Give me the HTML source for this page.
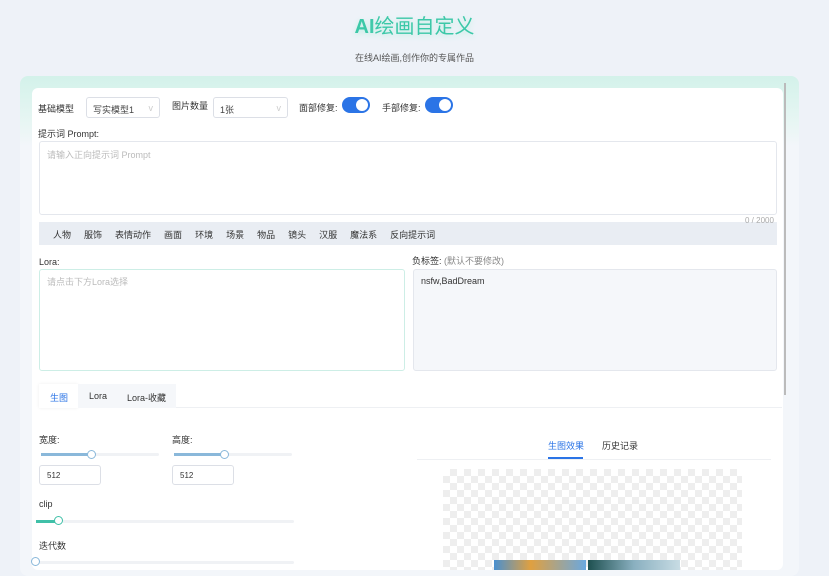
<!DOCTYPE html>
<html><head><meta charset="utf-8"><style>
*{margin:0;padding:0;box-sizing:border-box}
body{width:829px;height:570px;overflow:hidden;background:#eef2f8;font-family:"Liberation Sans","Noto Sans CJK SC",sans-serif;font-size:9px;color:#333;position:relative}
.a{position:absolute;white-space:nowrap}
.title{left:0;width:829px;top:10px;text-align:center;font-size:20px;font-weight:bold;color:#3cc8a8;text-shadow:0 2px 6px #bfeee2}
.sub{left:0;width:829px;top:51px;text-align:center;font-size:9px;color:#555}
.card{left:20px;top:76px;width:779px;height:500px;border-radius:8px;background:linear-gradient(#d3f2ea 0,#e9f6f4 50px,#f3f6fa 70px)}
.panel{left:32px;top:88px;width:751px;height:482px;background:#fff;border-radius:6px}
.sel{height:21px;border:1px solid #dcdfe6;border-radius:3px;background:#fff;padding:5px 6px;color:#444}
.tog{width:28px;height:16px;border-radius:8px;background:#2b74e6}
.tog:after{content:"";position:absolute;right:2px;top:2px;width:12px;height:12px;border-radius:50%;background:#fff}
.ta{border:1px solid #e4e7ed;border-radius:3px;background:#fff}
.ph{color:#bbb}
.tags span{margin-right:13px}
.inp{width:62px;height:20px;border:1px solid #dcdfe6;border-radius:3px;padding:5px 7px;font-size:8px}
.track{height:3px;background:#f0f2f5;border-radius:2px}
.knob{width:9px;height:9px;border-radius:50%;border:1.5px solid #8ab8da;background:#fff}
</style></head><body>
<div class="a title">AI<span style="font-weight:normal">绘画自定义</span></div>
<div class="a sub">在线AI绘画,创作你的专属作品</div>
<div class="a card"></div>
<div class="a panel"></div>
<div class="a" style="left:784px;top:83px;width:2px;height:312px;background:#bbb"></div>

<div class="a" style="left:38px;top:102px">基础模型</div>
<div class="a sel" style="left:86px;top:97px;width:74px">写实模型1 <span style="color:#ccc;float:right">v</span></div>
<div class="a" style="left:172px;top:99px">图片数量</div>
<div class="a sel" style="left:213px;top:97px;width:75px">1张 <span style="color:#ccc;float:right">v</span></div>
<div class="a" style="left:299px;top:101px">面部修复:</div>
<div class="a tog" style="left:342px;top:97px"></div>
<div class="a" style="left:382px;top:101px">手部修复:</div>
<div class="a tog" style="left:425px;top:97px"></div>

<div class="a" style="left:38px;top:127px">提示词 Prompt:</div>
<div class="a ta" style="left:39px;top:141px;width:738px;height:74px;padding:6px 7px"><span class="ph">请输入正向提示词 Prompt</span></div>
<div class="a tags" style="left:39px;top:222px;width:738px;height:23px;background:#e9edf3;padding:6px 14px">
<span>人物</span><span>服饰</span><span>表情动作</span><span>画面</span><span>环境</span><span>场景</span><span>物品</span><span>镜头</span><span>汉服</span><span>魔法系</span><span>反向提示词</span></div>
<div class="a" style="left:745px;top:216px;color:#aaa;font-size:8px">0 / 2000</div>

<div class="a" style="left:39px;top:257px">Lora:</div>
<div class="a ta" style="left:39px;top:269px;width:366px;height:102px;border-color:#cdeee6;padding:5px 7px"><span class="ph">请点击下方Lora选择</span></div>
<div class="a" style="left:412px;top:254px">负标签: <span style="color:#888">(默认不要修改)</span></div>
<div class="a ta" style="left:413px;top:269px;width:364px;height:102px;background:#f5f7fa;padding:6px 7px">nsfw,BadDream</div>

<div class="a" style="left:39px;top:384px;width:743px;height:24px;border-bottom:1px solid #eef0f3"></div>
<div class="a" style="left:39px;top:384px;width:39px;height:24px;background:#fff;color:#2b74e6;padding:7px 11px;box-shadow:0 0 3px #eee">生图</div>
<div class="a" style="left:78px;top:384px;width:38px;height:24px;background:#f5f7fa;padding:7px 11px">Lora</div>
<div class="a" style="left:116px;top:384px;width:60px;height:24px;background:#f5f7fa;padding:7px 11px">Lora-收藏</div>

<div class="a" style="left:39px;top:433px">宽度:</div>
<div class="a track" style="left:41px;top:453px;width:118px"></div>
<div class="a" style="left:41px;top:453px;width:51px;height:3px;background:#8ab8da"></div>
<div class="a knob" style="left:87px;top:450px"></div>
<div class="a inp" style="left:39px;top:465px">512</div>
<div class="a" style="left:172px;top:433px">高度:</div>
<div class="a track" style="left:174px;top:453px;width:118px"></div>
<div class="a" style="left:174px;top:453px;width:51px;height:3px;background:#8ab8da"></div>
<div class="a knob" style="left:220px;top:450px"></div>
<div class="a inp" style="left:172px;top:465px">512</div>
<div class="a" style="left:39px;top:499px">clip</div>
<div class="a track" style="left:36px;top:520px;width:258px"></div>
<div class="a" style="left:36px;top:520px;width:23px;height:3px;background:#40c0a8"></div>
<div class="a knob" style="left:54px;top:516px;border-color:#40c0a8"></div>
<div class="a" style="left:39px;top:539px">迭代数</div>
<div class="a track" style="left:36px;top:561px;width:258px"></div>
<div class="a knob" style="left:31px;top:557px"></div>

<div class="a" style="left:548px;top:439px;color:#2b74e6">生图效果</div>
<div class="a" style="left:548px;top:457px;width:35px;height:2px;background:#2b74e6"></div>
<div class="a" style="left:602px;top:439px">历史记录</div>
<div class="a" style="left:417px;top:459px;width:354px;height:1px;background:#eef0f3"></div>
<div class="a" style="left:443px;top:469px;width:299px;height:101px;background-color:#fff;background-image:linear-gradient(45deg,#eee 25%,transparent 25%,transparent 75%,#eee 75%),linear-gradient(45deg,#eee 25%,transparent 25%,transparent 75%,#eee 75%);background-size:14px 14px;background-position:0 0,7px 7px"></div>
<div class="a" style="left:494px;top:560px;width:92px;height:10px;background:linear-gradient(90deg,#4a90d0,#e0a040 40%,#6aa8e0)"></div>
<div class="a" style="left:588px;top:560px;width:92px;height:10px;background:linear-gradient(90deg,#1e5050,#8ab0c0 50%,#c8dce4)"></div>
</body></html>
